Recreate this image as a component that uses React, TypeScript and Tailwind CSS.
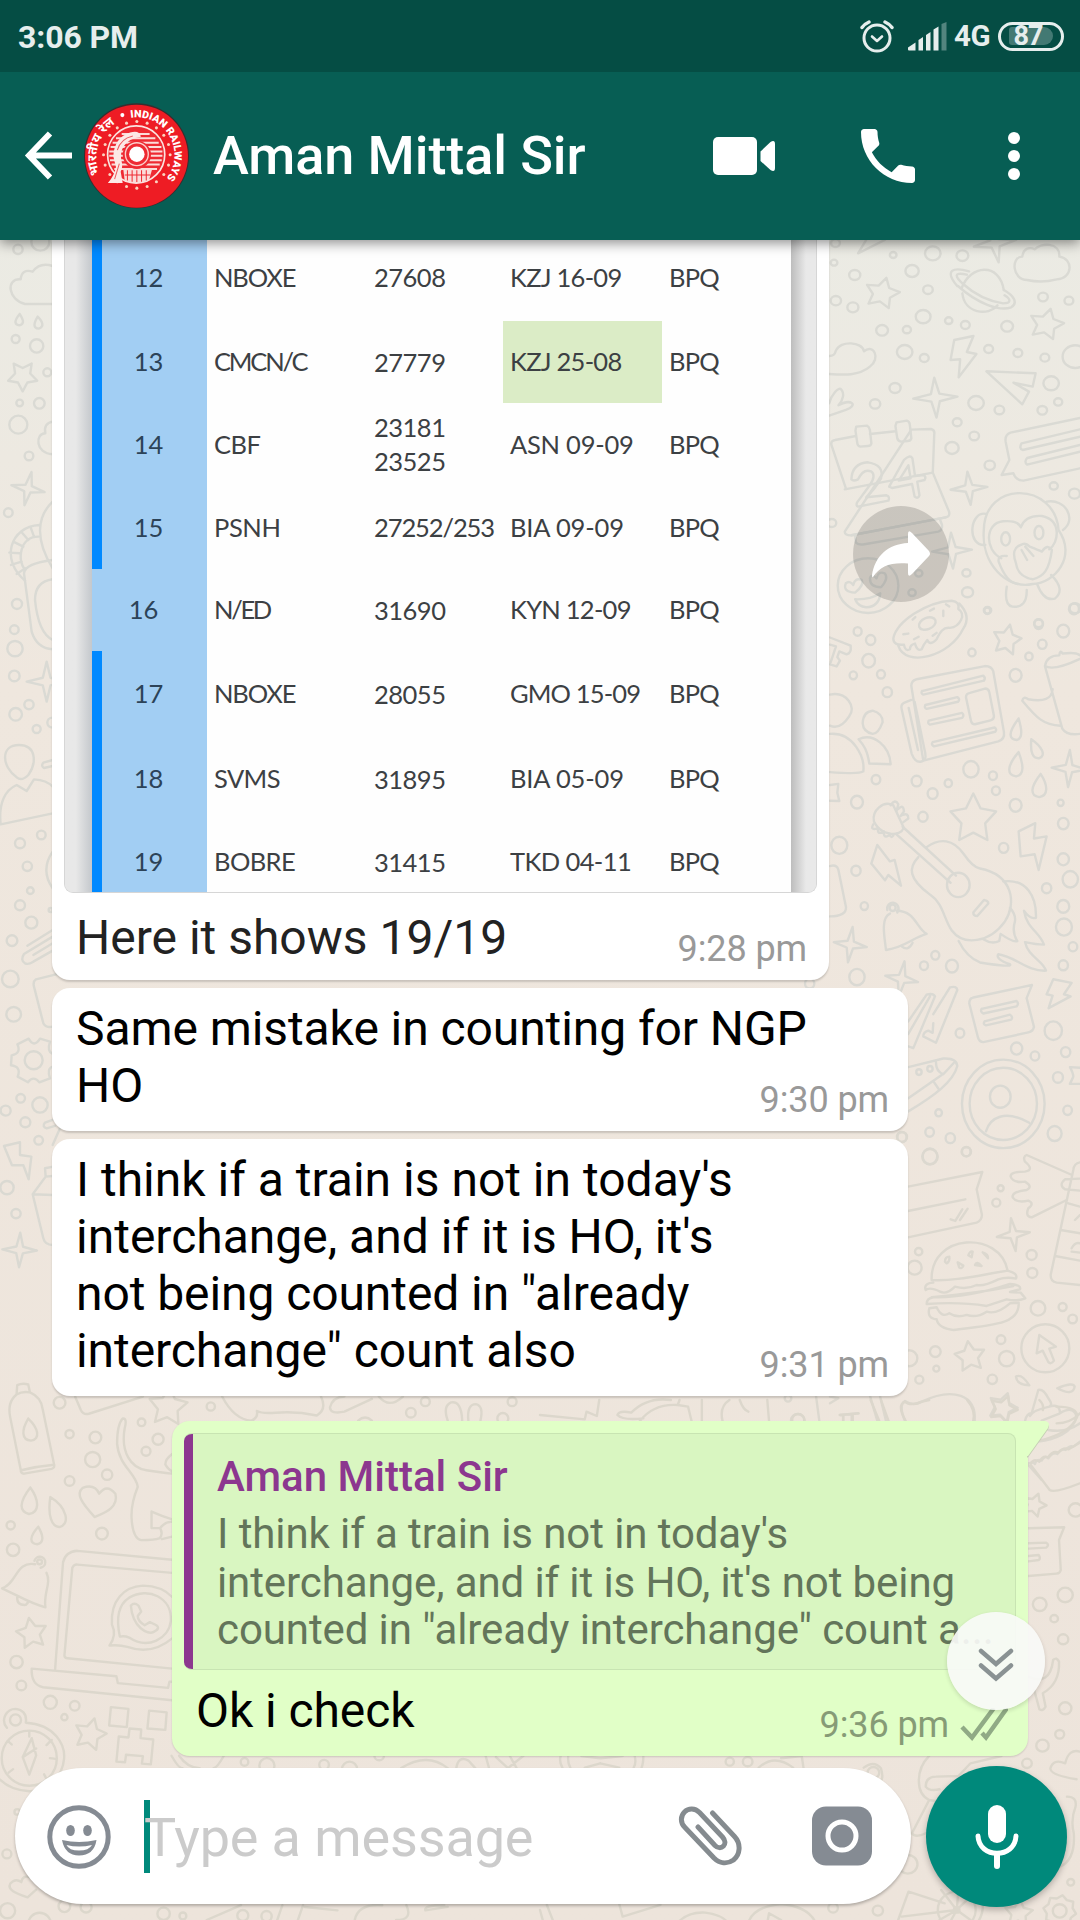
import React from "react";

type Pt = [number, number, number];

const starPath = (cx: number, cy: number, r: number, rot = 0, n = 5, inner = 0.52) => {
  let d = "";
  for (let i = 0; i < n * 2; i++) {
    const a = ((rot - 90 + (i * 180) / n) * Math.PI) / 180;
    const q = i % 2 ? r * inner : r;
    d += `${i ? "L" : "M"}${(cx + q * Math.cos(a)).toFixed(1)} ${(cy + q * Math.sin(a)).toFixed(1)}`;
  }
  return d + "Z";
};

const sparkPath = (cx: number, cy: number, r: number, rot = 0) => starPath(cx, cy, r, rot, 4, 0.27);

function Dots({ pts }: { pts: Pt[] }) {
  return (
    <>
      {pts.map(([x, y, r], i) => (
        <circle key={i} cx={x} cy={y} r={r} />
      ))}
    </>
  );
}

function Paths({ list }: { list: string[] }) {
  return (
    <>
      {list.map((d, i) => (
        <path key={i} d={d} />
      ))}
    </>
  );
}

function Wallpaper() {
  return (
    <svg
      className="absolute inset-0 [&_*]:[vector-effect:non-scaling-stroke]"
      width="1080"
      height="1920"
      viewBox="0 0 1080 1920"
      fill="none"
      strokeWidth="2.4"
      strokeLinecap="round"
      strokeLinejoin="round"
      aria-hidden="true"
    >
      {/* upper right */}
      <g stroke="#dadad4" transform="translate(500 230) scale(0.3699 0.3333)">
        <Dots
          pts={[
            [907, 39, 12], [1063, 75, 9], [1170, 70, 21], [1250, 77, 16], [903, 98, 9], [959, 135, 15], [1114, 123, 18],
            [1157, 179, 13], [908, 212, 14], [954, 232, 15], [1144, 260, 20], [1468, 201, 13], [1538, 212, 12],
            [1213, 272, 10], [1258, 285, 12], [1371, 289, 16], [1033, 301, 16], [1100, 299, 11], [1094, 366, 21],
            [1147, 384, 12], [1321, 357, 12], [1400, 369, 12], [1473, 383, 12], [1555, 380, 34], [1490, 460, 21],
            [1068, 474, 15], [1014, 522, 14], [1287, 519, 21], [1350, 540, 13], [1466, 541, 13], [1509, 516, 11],
            [1236, 577, 12], [1282, 618, 13], [1222, 654, 18], [1324, 706, 14], [1497, 768, 11], [1553, 791, 15],
            [897, 879, 12], [1132, 1030, 10], [1261, 1029, 11], [1114, 1088, 10], [1264, 1087, 15], [1318, 1141, 10],
            [1555, 1135, 15], [1456, 1180, 12],
          ]}
        />
        <Paths
          list={[
            starPath(1033, 190, 48, 14), starPath(1477, 283, 48, 14),
            sparkPath(1177, 503, 60, -3), sparkPath(1268, 775, 50, -5), sparkPath(1222, 962, 54, -3), sparkPath(1338, 40, 58, -10),
            "M968 70 L1040 30 M968 70 L990 30",
            "M1425 150 C1385 150 1380 80 1412 80 C1415 55 1430 50 1446 58 C1460 38 1515 35 1512 80 C1550 85 1550 145 1505 148 Q1465 160 1425 150",
            "M1248 175 C1270 105 1350 95 1362 180 M1250 190 C1255 250 1320 260 1345 226",
            "M1236 168 C1200 120 1225 110 1268 124 M1238 168 C1290 220 1350 245 1382 232 C1402 218 1388 196 1362 180 M1262 134 C1225 125 1230 140 1252 162 C1290 200 1330 215 1360 220 C1382 220 1382 208 1364 196",
            "M1228 330 L1280 318 L1262 366 L1288 372 L1240 442 L1244 388 L1218 390 Z",
            "M890 378 C900 378 905 375 908 362 C920 330 980 335 984 364 C1010 340 1030 385 1000 410 C970 438 930 435 890 432",
            "M1315 424 L1448 430 L1440 470 L1388 458 L1430 485 L1412 523 Z",
            "M890 520 C895 495 915 470 922 478 C932 490 928 510 915 526 C950 505 970 525 935 540 L890 557",
            "M935 775 L896 645 Q894 632 906 630 L962 618 M1000 612 L1070 604 M1112 599 L1165 597 Q1176 600 1174 612 L1170 728 L1214 845 Q1217 860 1205 862 L950 916 Q932 917 932 905 Z",
            "M932 778 L1170 728",
            "M963 590 L992 587 Q998 590 1000 600 L1004 640 Q1003 648 994 648 L974 650 Q967 648 966 640 L961 602 Z",
            "M1072 577 L1100 572 Q1107 574 1108 585 L1112 625 Q1110 633 1102 633 L1084 635 Q1076 633 1074 625 L1069 588 Z",
            "M950 748 Q952 700 995 697 Q1040 705 1030 745 Q1015 775 990 802 L1045 796 Q1055 800 1050 812 L968 830 Q962 828 965 818 L1000 765 Q1018 735 1003 724 Q982 715 968 748 Q955 755 950 748",
            "M1052 770 L1092 690 Q1108 672 1115 685 L1122 738 L1145 735 Q1153 740 1148 750 L1128 755 L1134 796 Q1130 808 1121 800 L1114 762 L1060 774 Z M1078 752 L1104 706 L1110 745 Z",
            "M960 916 L962 938 Q970 946 985 943 L1185 905 Q1197 900 1195 885 L1190 870 M950 916 L1205 862",
            "M1568 564 L1380 608 Q1364 615 1367 635 L1377 690 L1356 735 L1388 730 Q1395 752 1415 752 L1568 715",
            "M1568 598 L1410 640 Q1402 655 1413 660 L1568 620 M1568 645 L1425 684 Q1416 695 1425 704 L1568 665",
            "M1308 900 C1310 750 1500 755 1510 900 C1560 980 1500 1060 1440 1062 C1370 1080 1300 1000 1308 900 M1315 852 C1270 840 1260 950 1312 945 M1478 815 C1530 805 1560 870 1522 900",
            "M1355 985 C1310 960 1310 880 1360 874 Q1400 870 1408 892 Q1420 855 1465 858 C1520 870 1510 940 1485 958",
            "M1395 1000 Q1380 955 1408 945 Q1420 935 1432 950 Q1455 960 1465 965 Q1480 940 1492 960 C1485 1020 1470 1040 1440 1048 Q1400 1040 1395 1000 M1370 978 Q1345 975 1348 995 Q1370 1060 1400 1062 M1410 960 L1425 990 M1420 950 L1442 978",
            "M1370 1070 Q1362 1125 1385 1130 Q1425 1135 1424 1080 M1452 1062 Q1470 1115 1500 1106 Q1530 1080 1490 1035",
            "M935 1060 Q925 1085 960 1088 Q985 1065 978 1050 Q960 1042 955 1065 Q945 1050 935 1060 M1000 1045 Q1000 1072 1030 1072 Q1052 1045 1040 1030 Q1022 1022 1018 1045 Q1005 1030 1000 1045 M960 1108 Q1000 1110 1028 1090 Q1025 1130 990 1132 Q968 1130 960 1108",
          ]}
        />
        <circle cx="995" cy="1067" r="82" />
        <ellipse cx="1367" cy="927" rx="12" ry="20" />
        <ellipse cx="1457" cy="908" rx="12" ry="20" />
      </g>

      {/* middle right */}
      <g stroke="#dad9d3" transform="translate(580 600) scale(0.3333 0.3571)">
        <Dots
          pts={[
            [833, 88, 12], [872, 112, 14], [866, 170, 19], [820, 211, 11], [903, 208, 12], [922, 258, 14], [1222, 30, 9],
            [1376, 68, 13], [1450, 87, 18], [1387, 124, 13], [1347, 158, 11], [1176, 147, 11], [1307, 211, 18],
            [1482, 25, 15], [888, 503, 13], [1010, 507, 15], [1058, 542, 15], [1105, 513, 11], [1173, 474, 23],
            [1239, 492, 12], [1248, 534, 12], [1307, 575, 18], [1442, 568, 9], [1450, 626, 16], [831, 566, 18],
            [1029, 607, 14], [1271, 694, 14], [1450, 726, 17], [1471, 782, 23], [1400, 807, 14], [778, 687, 24],
            [828, 758, 14], [853, 857, 11], [1450, 858, 18], [1452, 916, 24], [1479, 971, 13], [1450, 1023, 14],
            [831, 1056, 23], [1032, 1024, 12], [1066, 995, 12], [1116, 1025, 18], [689, 1074, 14], [1420, 1206, 26],
            [1310, 1256, 17], [1365, 1277, 13], [1457, 1266, 14], [1140, 1213, 13], [1434, 1337, 15], [1463, 1429, 13],
            [1424, 1494, 21], [1076, 1436, 10], [1049, 1490, 13], [1111, 1507, 14], [1159, 1545, 13], [966, 1504, 14],
            [1050, 1558, 22], [1017, 1322, 8], [1050, 1313, 8],
          ]}
        />
        <Paths
          list={[
            starPath(1281, 112, 44, 12), starPath(1180, 614, 72, 0), sparkPath(1467, 472, 52, 3),
            sparkPath(811, 965, 50, 8), sparkPath(965, 1061, 50, 10),
            "M940 108 C950 60 1040 5 1115 2 Q1140 5 1135 25 C1160 40 1140 75 1110 78 C1090 75 1080 90 1070 110 Q1050 130 1042 112 Q1030 125 1025 138 Q1012 145 1005 122 Q990 125 990 138 Q975 145 972 125 Q940 128 940 108",
            "M955 128 C975 190 1110 160 1150 80 Q1175 45 1138 10 M1002 110 L1016 103 M970 96 L985 94 M1058 100 L1070 92 M1090 45 L1090 30 M1098 12 L1108 18 M1050 30 L1062 24 M998 55 L1006 48",
            "M750 105 L812 128 Q815 150 800 152 L778 144 L772 160 L780 170 L770 186 L750 180 M750 125 L768 130 L752 175",
            "M994 240 Q995 225 1010 222 L1215 185 Q1235 185 1240 200 L1272 370 Q1275 390 1255 396 L1030 450 Z M994 280 L972 288 Q962 292 965 305 L995 430 Q1005 455 1022 453 Q1040 450 1036 430 L1004 285 M986 302 L1014 420",
            "M1026 255 L1210 212 Q1218 218 1212 226 L1030 265 Q1022 262 1026 255 M1036 294 L1132 272 Q1142 278 1134 285 L1040 305 Q1032 302 1036 294 M1046 338 L1146 316 Q1154 322 1147 330 L1050 349 Q1042 346 1046 338 M1058 398 L1244 357 Q1252 362 1246 369 L1062 410 Q1052 405 1058 398",
            "M1158 272 Q1158 262 1170 260 L1215 248 Q1226 248 1228 258 L1242 325 Q1242 335 1232 337 L1185 348 Q1175 348 1173 338 Z",
            "M1395 185 L1447 360 Q1460 380 1500 375 M1395 185 Q1400 155 1438 155 Q1440 138 1448 150 Q1490 145 1500 155 M1395 185 Q1420 200 1500 165 M1418 250 Q1415 290 1345 278 Q1330 268 1327 282 C1370 330 1390 350 1442 352",
            "M1316 332 C1285 370 1285 390 1310 392 C1330 388 1325 360 1316 332 M1354 390 C1350 430 1360 445 1378 443 C1400 435 1385 410 1354 390 M1316 426 C1280 465 1280 490 1308 494 C1335 490 1330 460 1316 426 M1382 487 C1350 525 1350 548 1378 552 C1405 548 1405 520 1382 487",
            "M750 265 C800 255 830 300 808 325 Q780 365 750 352 M750 375 C820 370 855 440 850 480 Q840 488 750 482 M836 390 C880 370 930 410 932 460 L868 458 C862 420 850 405 836 390 M848 345 Q850 312 878 310 Q908 318 908 342 Q895 375 878 375 Q850 370 848 345",
            "M750 518 L775 515 L772 540 L778 563 L750 562",
            "M882 620 C875 590 910 560 940 575 L970 635 Q972 650 945 655 Q900 655 882 620",
            "M932 575 Q945 555 955 572 L950 590 M955 585 Q970 570 972 592 L962 605 M968 602 Q985 595 985 612 L970 622 M880 628 Q870 645 890 640 M895 638 Q890 658 910 650 M912 648 Q910 668 925 660 M928 655 Q935 672 942 655",
            "M968 635 L1128 772 M948 655 L1112 792",
            "M1040 692 C1080 665 1120 670 1150 710 Q1180 750 1200 752 C1300 770 1310 850 1275 900 C1230 960 1150 970 1115 925 C1090 890 1090 850 1050 825 C985 780 985 750 1015 720",
            "M1180 875 L1212 840 Q1225 842 1225 850 L1192 885 Q1180 885 1180 875",
            "M1270 788 C1340 780 1370 830 1368 890 Q1350 895 1332 870 C1340 920 1380 930 1392 965 Q1370 965 1335 958 C1345 1000 1390 1010 1398 1038 C1340 1040 1310 1000 1255 992 Q1245 1005 1290 1020 Q1300 1030 1200 1015 Q1160 1000 1136 955 M1210 950 Q1235 965 1258 955 L1262 935 Q1300 960 1312 955 Q1295 930 1305 900 Q1308 880 1290 862",
            "M892 686 L930 732 L944 728 L963 800 L925 770 L915 785 L874 738 Z M1316 648 L1366 625 L1362 668 L1400 662 L1376 756 L1364 712 L1322 718 Z M1420 1062 L1475 1072 L1452 1104 L1472 1110 L1406 1143 L1418 1108 L1400 1104 Z",
            "M930 878 C900 890 915 950 918 980 C970 975 1000 945 1040 935 C1010 920 1005 870 950 870 M965 970 Q985 985 998 960 M922 868 A17 17 0 1 1 952 875",
            "M750 745 Q770 740 775 755 L798 860 Q800 885 750 886",
            "M985 1180 L1040 1105 Q1060 1100 1065 1110 L1000 1255 L985 1250 M1060 1160 L1110 1085 Q1130 1080 1132 1092 L1068 1240 L1030 1222 Q1030 1210 1045 1206 L1058 1212 L1060 1185 M985 1215 L1050 1110",
            "M1180 1113 L1356 1078 L1340 1115 L1362 1195 Q1360 1208 1345 1211 L1210 1238 Q1198 1238 1194 1225 L1168 1130 Q1168 1115 1180 1113 M1205 1145 L1310 1123 Q1318 1130 1310 1138 L1210 1158 Q1200 1152 1205 1145 M1214 1180 L1290 1161 Q1300 1168 1294 1175 L1218 1191 Q1208 1188 1214 1180",
            "M985 1308 L1090 1284 Q1130 1282 1132 1305 C1120 1350 1060 1390 985 1432 M1068 1295 Q1068 1320 1090 1328 L1122 1296 M985 1395 L1085 1330 M1062 1350 L1075 1368",
            "M1500 1310 L1470 1308 Q1480 1325 1480 1335 L1470 1355 L1500 1355",
            "M1218 1488 C1230 1450 1275 1425 1348 1464",
          ]}
        />
        <ellipse cx="1042" cy="66" rx="26" ry="16" transform="rotate(-20 1042 66)" />
        <circle cx="1135" cy="798" r="34" />
        <circle cx="1270" cy="1411" r="124" />
        <circle cx="1270" cy="1411" r="101" />
        <circle cx="1261" cy="1391" r="31" />
        <circle cx="938" cy="862" r="9" />
      </g>

      {/* lower right, beside the long message */}
      <g stroke="#dcd8cf" transform="translate(780 1000) scale(0.3333)">
        <Dots
          pts={[
            [450, 470, 23], [559, 455, 14], [366, 411, 15], [662, 565, 9], [649, 608, 12], [755, 765, 15], [757, 819, 15],
            [416, 755, 11], [404, 803, 21], [774, 925, 22], [848, 921, 12], [878, 957, 13], [663, 1019, 13], [466, 1055, 16],
            [469, 1106, 9], [418, 1139, 12], [680, 1076, 23], [637, 1138, 14], [388, 1075, 24], [796, 1045, 72],
            [24, 1195, 10], [53, 1262, 20],
          ]}
        />
        <Paths
          list={[
            sparkPath(700, 704, 50, -8), starPath(570, 1070, 47, -8), starPath(668, 1222, 45, 20),
            "M384 560 L607 516 L590 568 L606 645 Q605 662 590 668 L384 712 M384 633 L556 598 M512 658 L526 663 L547 628 M540 660 L563 626",
            "M876 525 L740 465 Q728 470 735 485 Q765 510 735 515 Q690 515 692 530 Q700 550 735 545 Q760 560 740 570 Q695 575 698 592 Q710 610 745 602 Q765 610 745 625 Q735 650 755 652 L860 600",
            "M900 487 Q882 490 880 510 L812 825 Q812 845 830 848 L900 855 M900 536 L855 538 Q835 555 855 568 L900 572 M865 610 L900 620 M842 690 L900 700 M825 768 L900 782 M885 660 L900 645 M875 745 Q885 725 900 730 M875 755 L900 758",
            "M455 840 C450 700 660 690 683 812 Q715 820 708 836 Q680 830 655 838 Q610 860 590 855 Q560 870 525 860 Q500 885 480 875 Q450 860 437 870 Q430 850 460 848 M455 840 C520 845 600 825 683 812",
            "M440 912 Q440 895 460 892 Q560 895 690 852 Q725 855 720 868 L690 876 L722 878 L736 895 Q710 905 680 898 L620 918 Q540 905 440 912 M455 892 Q590 880 700 858",
            "M470 958 Q440 955 448 925 L470 922 Q485 955 508 940 Q530 955 560 945 Q590 955 620 935 Q650 945 690 910 L716 908 C720 970 650 975 520 990 Q475 985 470 958",
            "M495 785 Q495 770 508 770 Q510 785 500 790 Z M533 787 L550 797 Q545 808 538 803 Z M565 766 Q570 752 578 755 L575 772 Z M608 757 Q625 762 624 775 Z M585 795 Q590 782 605 798 Z",
            "M770 1060 L778 1005 L828 1040 L808 1046 L822 1082 Q812 1095 805 1086 L788 1052 Z",
            "M708 1130 Q725 1120 748 1156 Q710 1155 708 1130 M832 1165 Q880 1145 884 1160 Q880 1190 832 1165",
            "M375 1263 Q355 1215 375 1203 Q400 1220 425 1205 C520 1160 590 1185 584 1263",
            "M735 1263 Q740 1240 755 1240 L775 1170 Q790 1165 805 1195 Q820 1215 808 1220 Q760 1230 750 1248 M808 1220 Q840 1210 840 1240 L785 1262 M840 1240 Q880 1215 890 1250 C880 1300 820 1320 775 1325 M805 1290 Q860 1300 900 1270",
            "M745 1390 Q760 1385 765 1392 Q770 1375 785 1382 Q795 1365 805 1375 Q820 1355 832 1362 Q845 1345 857 1350 Q870 1335 880 1340 L900 1325 M745 1395 L785 1440",
            "M108 1188 L118 1263 M270 1188 L292 1263 M300 1188 L318 1263 M150 1190 L175 1195 L150 1210 M180 1245 L235 1240 M190 1263 L190 1248 M215 1263 L215 1245",
          ]}
        />
      </g>

      {/* lower left */}
      <g stroke="#dcd7cc" transform="translate(0 1380) scale(0.3444)">
        <Dots
          pts={[
            [173, 66, 17], [202, 157, 12], [277, 167, 17], [269, 231, 22], [202, 293, 14], [311, 275, 15], [411, 123, 11],
            [459, 172, 16], [424, 207, 13], [31, 422, 12], [38, 493, 18], [296, 446, 17], [612, 77, 12], [48, 819, 18],
            [62, 887, 14], [146, 936, 19], [217, 946, 14], [187, 979, 9], [45, 987, 16], [115, 528, 7], [20, 1376, 13],
            [22, 1541, 22], [187, 1528, 17], [250, 1530, 16], [475, 1550, 18], [531, 1556, 10], [1235, 63, 13],
            [1193, 95, 14], [1487, 63, 13], [1460, 112, 16], [710, 1109, 11], [775, 1120, 22], [941, 1117, 14],
            [1015, 1130, 22], [1101, 1090, 14], [705, 1555, 16], [774, 1557, 15], [115, 1580, 33], [50, 1254, 8],
          ]}
        />
        <Paths
          list={[
            starPath(488, 78, 58, 5), starPath(92, 736, 46, -10), starPath(262, 1029, 48, 15),
            "M48 42 L50 15 Q65 8 82 13 L87 36 M48 42 Q65 32 87 36 Q120 50 124 85 L157 245 Q160 255 150 258 L70 272 Q60 272 60 260 L30 110 Q20 65 48 42 M62 262 Q110 250 157 246 M82 112 C62 145 62 175 90 176 C118 172 112 140 82 112",
            "M218 48 L235 88 Q242 102 258 98 L415 48 M645 48 Q680 115 730 118 Q750 110 746 90 Q760 98 800 95 Q860 90 920 103 Q950 85 932 48 M958 80 Q965 50 1000 48 M958 80 Q960 100 1000 92 L1080 55 M1100 48 Q1130 85 1170 48",
            "M1300 118 Q1285 75 1310 65 Q1340 60 1342 118 M1360 118 Q1355 70 1382 70 Q1405 75 1395 118 M1040 118 Q1060 100 1080 118",
            "M356 112 Q340 130 340 185 C345 250 395 270 400 310 Q380 360 382 400 Q385 460 410 465 Q450 465 462 460 Q475 450 465 430 L440 430 L440 382 Q470 395 500 405 M356 112 Q370 110 362 140 C350 210 380 255 425 262 Q480 270 500 272 M500 215 Q480 230 480 245 Q490 262 500 265 M465 430 Q480 410 500 412 M470 462 L500 455",
            "M88 312 C55 355 55 382 84 389 C115 385 115 350 88 312 M146 340 C138 395 150 425 172 427 C205 420 195 370 146 340 M111 426 C85 455 85 475 108 477 C130 472 125 450 111 426",
            "M275 398 C235 355 220 330 240 313 Q275 300 288 330 Q310 300 335 330 C345 370 305 385 275 398",
            "M102 535 C45 525 50 590 6 605 C50 625 90 650 132 660 C125 620 150 590 135 560 M100 525 A16 16 0 1 1 118 545 M50 630 Q48 655 75 653 L82 645",
            "M160 840 L183 530 Q190 498 225 496 L500 522 M187 800 L210 545 Q215 535 225 536 L500 560 M187 800 Q188 808 196 808 L500 838",
            "M92 838 L338 860 L342 880 L488 894 L492 876 L500 876 M92 838 Q90 885 125 892 L500 930",
            "M318 771 Q340 740 325 710 C320 640 360 600 415 597 Q470 598 500 630 M318 771 Q345 768 370 775 Q440 800 500 750 M348 745 Q330 660 375 632 C430 600 500 630 496 700 C490 750 430 785 375 748 Q362 742 348 745",
            "M380 655 C385 720 430 740 445 732 Q470 720 450 710 L435 703 L420 712 Q400 700 400 685 L410 672 L402 655 Q390 645 380 655",
            "M322 950 L373 955 L368 1008 L317 1003 Z M433 960 L484 965 L480 1016 L428 1012 Z M376 1012 L410 1015 L408 1040 L445 1044 L438 1116 L412 1114 L415 1092 L366 1088 L363 1110 L338 1108 L345 1035 L373 1038 Z",
            "M20 1010 C0 985 20 955 45 955 Q80 960 75 995 C160 1000 190 1060 186 1100 C180 1160 130 1195 85 1194 Q30 1190 0 1160 M92 1040 L105 1090 L85 1146 L66 1095 Z M66 1095 L105 1070 M85 1020 L85 1035 M150 1045 L135 1060 M162 1100 L145 1098 M135 1158 L128 1145 M22 1048 L34 1058 M25 1140 L38 1130",
            "M80 1502 C45 1490 20 1480 30 1462 Q45 1445 62 1458 Q65 1435 90 1445 M80 1502 L105 1480",
            "M498 1091 Q520 1130 530 1127 M520 1091 Q545 1127 580 1127 M650 1091 Q630 1127 620 1127",
            "M1165 1127 Q1240 1080 1300 1127 M1325 1127 Q1330 1090 1360 1105 L1380 1127 M1410 1091 L1420 1127 M1440 1095 L1475 1127 L1520 1091 M1480 1091 L1500 1127",
            "M600 1568 L700 1525 M820 1525 L805 1568 M880 1525 L865 1568 M885 1530 L980 1540 M1030 1568 Q1040 1520 1110 1525 M1180 1525 Q1200 1568 1150 1568 M1235 1540 Q1230 1525 1290 1525 M1235 1540 L1300 1530",
          ]}
        />
        <circle cx="85" cy="1098" r="80" />
      </g>

      {/* bottom right */}
      <g stroke="#dcd7cc" transform="translate(540 1400) scale(0.3444 0.3333)">
        <Dots
          pts={[
            [1555, 330, 20], [1451, 613, 20], [1525, 585, 22], [1493, 656, 11], [1519, 718, 15], [1525, 925, 18],
            [1509, 1003, 13], [1459, 1037, 18], [1414, 1090, 14], [551, 1085, 12], [603, 1085, 14], [968, 1118, 17],
            [1068, 1393, 28], [851, 1524, 14], [981, 1532, 15], [1541, 1447, 10], [1509, 1533, 20], [1210, 1530, 8],
            [750, 60, 18],
          ]}
        />
        <Paths
          list={[
            starPath(1435, 315, 36, 20), starPath(1345, 28, 42, 20), starPath(1390, 1540, 42, 5), starPath(1509, 1533, 48, 10, 8, 0.8),
            "M1450 0 Q1465 15 1460 30 M1500 20 Q1560 20 1560 50 Q1540 100 1450 122 M1500 70 Q1540 70 1568 40 M1425 190 Q1435 175 1450 185 Q1460 165 1475 172 Q1490 150 1505 158 Q1520 140 1535 148 L1568 128 M1425 195 L1480 270 Q1495 280 1568 250",
            "M1418 385 L1522 382 L1507 420 L1512 510 Q1510 520 1500 521 L1418 528 M1418 430 L1470 428 Q1480 435 1470 443 L1418 446 M1418 468 L1448 465 Q1455 475 1448 480 L1418 484",
            "M1418 830 Q1480 860 1490 780 Q1500 770 1507 785 Q1510 850 1460 880 L1468 920 Q1460 935 1450 928 L1435 870",
            "M1120 1300 Q1090 1315 1080 1300 L1130 1200 C1090 1180 1090 1110 1130 1068 M1130 1200 L1160 1205 M1120 1160 Q1120 1130 1150 1130 L1215 1128 L1250 1090 L1340 1068 M1120 1160 Q1130 1175 1160 1168",
            "M1558 1138 Q1480 1125 1482 1105 Q1490 1075 1525 1090 Q1535 1045 1568 1055 M1530 1190 Q1560 1190 1555 1220 Q1540 1260 1550 1300 Q1555 1380 1510 1400",
            "M60 1068 Q55 1085 65 1103 M82 1068 Q80 1090 88 1103 M300 1068 Q300 1090 295 1103 M275 1068 Q280 1090 272 1103 M175 1075 L120 1068 M175 1075 L240 1068 M175 1090 L130 1103 M175 1090 L230 1103 M635 1103 Q680 1060 735 1103 M700 1075 L760 1068 L765 1103 M940 1103 Q970 1080 990 1105 Q1000 1140 985 1145",
            "M1040 1560 L1070 1475 L1175 1510 M1050 1550 L1210 1530 L1165 1470 M1210 1530 L1215 1470 M1210 1530 L1250 1490 M1210 1530 L1160 1560 M1210 1530 L1190 1568 M1210 1530 L1250 1560 M1285 1500 Q1290 1540 1270 1568",
            "M230 1512 L240 1550 L350 1515 M400 1568 Q430 1535 480 1538 Q530 1545 545 1568 M605 1568 Q620 1520 700 1512 Q780 1520 800 1568 M660 1568 L665 1540 L700 1560 M0 1530 L10 1568 M20 1515 L40 1568",
            "M0 45 L130 58 L135 35 L165 48 L172 0 M225 45 Q230 30 265 38 Q310 -10 380 0 M225 45 Q240 62 300 55 M290 63 Q330 10 400 15 L430 20 M400 15 L405 0 M430 20 L440 63 M470 63 L470 0 M530 63 Q520 20 550 0 M580 0 Q590 30 605 35 M660 0 L665 63",
            "M870 45 L925 40 M880 62 L880 48 M908 62 L908 42 M960 0 L985 63 M990 0 L1012 63 M1062 63 Q1035 15 1060 5 Q1075 20 1110 5 L1130 0 M1240 0 Q1265 30 1258 63",
          ]}
        />
        <circle cx="1210" cy="1530" r="55" />
      </g>

      {/* left edge, upper part */}
      <g stroke="#dadad4" transform="translate(0 240) scale(0.3333)">
        <Dots
          pts={[
            [54, 28, 14], [121, 5, 27], [47, 297, 12], [110, 318, 20], [142, 397, 12], [59, 489, 10], [118, 490, 16],
            [55, 554, 27], [87, 648, 13], [25, 818, 13], [51, 1092, 15], [43, 1169, 13], [45, 1226, 23], [43, 1308, 16],
            [87, 1394, 14], [47, 1423, 19], [110, 1467, 12], [157, 1448, 15],
          ]}
        />
        <Paths
          list={[
            starPath(68, 408, 46, 180), sparkPath(84, 746, 51, 12), sparkPath(140, 1325, 60, 0),
            "M158 192 L75 192 C25 180 15 115 62 118 Q65 85 98 95 Q120 65 158 78",
            "M59 222 C40 245 45 255 58 256 C75 252 70 240 59 222 M113 230 C98 255 102 265 116 266 C134 260 128 245 113 230",
            "M158 545 Q130 550 136 580 C105 580 105 640 158 643",
            "M158 785 C110 830 105 900 158 985 M118 855 C30 860 0 960 75 1022 M115 890 C60 890 50 960 75 990 M65 877 L85 900 M92 862 L102 890 M40 905 L70 920 M28 938 L60 940 M33 975 L65 965 M50 1002 L76 985",
            "M158 960 Q75 970 72 1000 L95 1175 Q110 1225 158 1228 M158 1018 Q105 1025 105 1080 Q115 1180 158 1200",
          ]}
        />
      </g>

      {/* left edge, lower part */}
      <g stroke="#dad9d2" transform="translate(0 740) scale(0.3333)">
        <Dots
          pts={[
            [124, 285, 13], [60, 310, 15], [82, 379, 14], [91, 452, 10], [60, 496, 15], [94, 548, 18], [36, 602, 16],
            [31, 717, 25], [41, 823, 22], [101, 961, 27], [62, 1075, 13], [17, 1112, 15], [120, 1095, 23], [76, 1147, 15],
            [116, 1201, 13], [21, 1343, 20], [48, 1421, 14], [152, 510, 6],
          ]}
        />
        <Paths
          list={[
            "M57 15 C110 15 110 70 85 105 Q65 125 50 112 C5 80 0 15 57 15",
            "M2 253 C-5 190 15 150 50 135 L80 153 L102 118 Q140 120 158 140 M2 253 L158 220 M158 60 L130 68 Q122 78 132 84 L158 78",
            "M158 335 Q120 390 158 445 M82 617 L158 570 M158 590 L72 642 Q60 660 75 670 Q85 675 100 665 L158 632 M100 645 L158 610",
            "M180 700 L108 718 Q98 725 102 740 L130 850 Q140 865 158 860",
            "M86 896 Q102 925 120 896 L150 905 Q140 935 158 942 M86 896 L52 913 Q65 940 35 946 L33 976 Q65 980 53 1010 L84 1027 Q100 1005 118 1027 L150 1015 Q140 985 158 980",
            "M12 1218 L60 1207 L60 1245 L94 1250 L86 1318 L70 1276 L36 1276 Z",
            "M158 1140 L135 1148 Q125 1160 140 1165 L165 1158 M158 1215 L180 1165 M160 1280 L135 1285 L137 1310 L98 1363 L130 1495 Q135 1515 158 1515 M98 1363 L158 1365 M137 1310 L158 1308",
            sparkPath(59, 1530, 52, 2),
          ]}
        />
      </g>
    </svg>
  );
}

function RailwaysEmblem() {
  const rays = Array.from({ length: 20 }, (_, i) => i * 18);
  return (
    <svg width="105" height="106" viewBox="13 10 312 315" aria-label="Indian Railways">
      <circle cx="169" cy="167" r="156" fill="#3a2c2e" />
      <circle cx="169" cy="168" r="153" fill="#ee1c24" />
      <g fill="#fbd3c0">
        {rays.map((a) => (
          <circle
            key={a}
            cx={170 + 99 * Math.sin((a * Math.PI) / 180)}
            cy={164 - 99 * Math.cos((a * Math.PI) / 180)}
            r="4.5"
          />
        ))}
      </g>
      <circle cx="168" cy="163" r="85" fill="#ee2a32" stroke="#fce4e0" strokeWidth="5" />
      <g stroke="#fbdcd9" strokeWidth="6">
        <path d="M125 102H208M108 115H225M98 128H235M92 141H243M88 154H246M88 167H246M90 180H244M95 193H238M103 206H230" />
      </g>
      <circle cx="170" cy="164" r="42" fill="#ee2a32" />
      <path
        d="M100 168Q104 112 150 98Q178 90 182 110Q146 114 130 140Q120 158 124 180Q130 200 122 214L128 248H84Q104 224 108 200Z"
        fill="#fce9e6"
      />
      <path d="M112 150Q122 116 158 108M104 236L118 190" fill="none" stroke="#ee5a5e" strokeWidth="3" />
      <circle cx="170" cy="162" r="34" fill="none" stroke="#fbd0cc" strokeWidth="4" />
      <circle cx="170" cy="162" r="23" fill="#fff" />
      <path d="M130 208H215L206 240Q170 255 134 240Z" fill="#fbdcd9" />
      <path d="M142 210V240M156 210V244M170 210V245M184 210V244M198 210V240M134 224H210" stroke="#ee2a32" strokeWidth="3" />
      <path id="ringEn" d="M152 54A112 112 0 0 1 249 244" fill="none" />
      <path id="ringHi" d="M60 222A122 122 0 0 1 122 62" fill="none" />
      <circle cx="127" cy="46" r="6" fill="#fff" />
      <text fill="#fff" fontFamily="Roboto, sans-serif" fontWeight="900" fontSize="31">
        <textPath href="#ringEn" textLength="268" lengthAdjust="spacingAndGlyphs">
          INDIAN RAILWAYS
        </textPath>
      </text>
      <text fill="#fff" fontFamily="'Noto Sans Devanagari', 'Noto Sans', sans-serif" fontWeight="700" fontSize="38">
        <textPath href="#ringHi" textLength="172" lengthAdjust="spacingAndGlyphs">
          भारतीय रेल
        </textPath>
      </text>
    </svg>
  );
}

function StatusBar() {
  return (
    <div className="relative flex h-[72px] items-center bg-[#054d44] pl-[18px] pr-[16px] text-[#e6eeed]">
      <span className="pt-[2px] text-[32px] font-bold leading-none tracking-[-0.100px]">3:06 PM</span>
      <div className="ml-auto flex items-center">
        <svg width="34" height="34" viewBox="0 0 34 34" fill="none" stroke="currentColor" strokeWidth="3" strokeLinecap="round" strokeLinejoin="round">
          <circle cx="17" cy="19" r="13" />
          <path d="M12 17.5L17 22L22 17.5" strokeWidth="2.6" />
          <path d="M2 8.5Q4.500 5 9 3M32 8.500Q29.500 5 25 3" strokeWidth="3.400" />
        </svg>
        <svg className="ml-[14px]" width="39" height="29" viewBox="0 0 39 29" fill="currentColor">
          <path d="M0 25.500L7.500 20.500V28.500H1Q0 28.500 0 27.500Z" />
          <path d="M10.500 18L15 15V28.500H10.500ZM18 13L22.500 10V28.500H18ZM25.500 7.500L30.500 4.500V28.500H25.500Z" />
          <path d="M33.500 2L38.500 0V28.500H33.500Z" opacity="0.350" />
        </svg>
        <span className="ml-[7px] w-[37px] pt-[2px] text-[29.500px] font-bold leading-none tracking-[-0.500px]">4G</span>
        <div className="ml-[7px] flex h-[29px] w-[66px] items-center rounded-full border-[3px] border-[#e6eeed] px-[8px]">
          <div className="flex h-[18px] w-[48px] items-center justify-center rounded-l-[3px] rounded-r-[9px] bg-white/25 pr-[6px]">
            <span className="text-[27px] font-bold leading-none tracking-[-1px]">87</span>
          </div>
        </div>
      </div>
    </div>
  );
}

function Header() {
  return (
    <div className="relative flex h-[168px] items-center bg-[#075e54] pl-[24px] pr-[60px] text-white">
      <svg className="-mt-[1px]" width="48" height="49" viewBox="0 0 48 49" fill="none" stroke="currentColor" strokeWidth="6">
        <path d="M48 24.500H5M26 2.500L5 24.500L26 46.500" />
      </svg>
      <div className="ml-[12px]">
        <RailwaysEmblem />
      </div>
      <span className="ml-[24px] text-[54px] font-medium leading-none tracking-[-0.080px] whitespace-nowrap">Aman Mittal Sir</span>
      <svg className="ml-auto" width="62" height="40" viewBox="0 0 62 40" fill="currentColor">
        <rect x="0" y="1" width="44" height="38" rx="5" />
        <path d="M47.500 15.500L57.500 6Q62 3.500 62 8V32Q62 36.500 57.500 34L47.500 25Z" />
      </svg>
      <svg className="ml-[86px]" width="54" height="54" viewBox="3 3 18 18" fill="currentColor">
        <path d="M6.620 10.790c1.440 2.830 3.760 5.140 6.590 6.590l2.200-2.200c.27-.27.67-.36 1.020-.24 1.120.37 2.330.57 3.570.57.55 0 1 .45 1 1V20c0 .55-.45 1-1 1-9.390 0-17-7.610-17-17 0-.55.45-1 1-1h3.500c.55 0 1 .45 1 1 0 1.250.2 2.450.57 3.570.11.35.03.74-.25 1.020l-2.200 2.200z" />
      </svg>
      <svg className="ml-[93px]" width="12" height="50" viewBox="0 0 12 50" fill="currentColor">
        <circle cx="6" cy="7" r="6" />
        <circle cx="6" cy="25" r="6" />
        <circle cx="6" cy="43" r="6" />
      </svg>
    </div>
  );
}

const rows = [
  { n: "12", h: "h-[87px]", type: "NBOXE", tt: "tracking-[-1.100px]", loco: ["27608"], at: "KZJ 16-09", ta: "tracking-[-0.750px]", bar: true },
  { n: "13", h: "h-[82px]", type: "CMCN/C", tt: "tracking-[-2.200px]", loco: ["27779"], at: "KZJ 25-08", ta: "tracking-[-0.750px]", bar: true, mark: true },
  { n: "14", h: "h-[83px]", type: "CBF", tt: "tracking-[-0.500px]", loco: ["23181", "23525"], at: "ASN 09-09", ta: "tracking-[-0.250px]", bar: true },
  { n: "15", h: "h-[83px]", type: "PSNH", tt: "tracking-[-0.400px]", loco: ["27252/253"], at: "BIA 09-09", ta: "tracking-[-0.150px]", bar: true },
  { n: "16", h: "h-[82px]", type: "N/ED", tt: "tracking-[-2.300px]", loco: ["31690"], at: "KYN 12-09", ta: "tracking-[-0.750px]", bar: false },
  { n: "17", h: "h-[86px]", type: "NBOXE", tt: "tracking-[-1.100px]", loco: ["28055"], at: "GMO 15-09", ta: "tracking-[-0.850px]", bar: true },
  { n: "18", h: "h-[84px]", type: "SVMS", tt: "tracking-[-0.600px]", loco: ["31895"], at: "BIA 05-09", ta: "tracking-[-0.150px]", bar: true },
  { n: "19", h: "h-[82px]", type: "BOBRE", tt: "tracking-[-0.600px]", loco: ["31415"], at: "TKD 04-11", ta: "tracking-[-0.600px]", bar: true },
];

function SheetPhoto() {
  return (
    <div className="flex h-[653px] overflow-hidden rounded-b-[9px] border-x border-b border-[#d6d6d6] bg-[#e9e9e9]">
      <div className="w-[27px] bg-linear-to-r from-[#e8e8e8] from-40% to-[#c4c8cc]" />
      <div className="-mt-[6px] w-[699px] bg-[#fefefe] font-[Lato] text-[25.500px] text-[#3c4043]">
        {rows.map((r) => (
          <div key={r.n} className={`flex items-stretch ${r.h}`}>
            <div
              className={`flex w-[115px] items-center justify-center bg-[#a2cef3] pr-[12px] pb-[1px] text-[#2c4358] ${
                r.bar ? "border-l-10 border-[#0089ff]" : ""
              }`}
            >
              {r.n}
            </div>
            <div className={`flex w-[160px] items-center pb-[1px] pl-[7px] ${r.tt}`}>{r.type}</div>
            <div
              className={`flex w-[136px] flex-col justify-center pb-[1px] pl-[7px] leading-[34px] ${
                r.n === "15" ? "tracking-[-1.100px]" : "tracking-[-0.500px]"
              }`}
            >
              {r.loco.map((l) => (
                <span key={l}>{l}</span>
              ))}
            </div>
            <div className={`flex w-[159px] items-center pb-[1px] pl-[7px] whitespace-nowrap ${r.ta} ${r.mark ? "bg-[#dbecc6]" : ""}`}>
              {r.at}
            </div>
            <div className="flex items-center pb-[1px] pl-[7px] tracking-[-0.800px]">BPQ</div>
          </div>
        ))}
      </div>
      <div className="flex-1 bg-linear-to-r from-[#bdbdbd] to-[#e9e9e9] to-60%" />
    </div>
  );
}

function Time({ children }: { children: string }) {
  return (
    <span className="block text-[36px] leading-[42px] tracking-[-0.100px] whitespace-nowrap text-[#999999]">{children}</span>
  );
}

const bubble = "ml-[52px] rounded-[18px] bg-white shadow-[0_2px_2px_rgba(0,0,0,0.16)]";

function Messages() {
  return (
    <div className="flex flex-col gap-2 text-[48px] leading-[57px] tracking-[-0.080px] text-black">
      <div className="flex items-start">
        <div className="ml-[52px] flex w-[777px] flex-col rounded-b-[18px] bg-white px-[12px] shadow-[0_2px_2px_rgba(0,0,0,0.16)]">
          <SheetPhoto />
          <div className="flex h-[87px] items-end justify-between pr-[10px] pb-[10px] pl-[12px]">
            <p className="mb-[4px] tracking-normal text-[#222222]">Here it shows 19/19</p>
            <Time>9:28 pm</Time>
          </div>
        </div>
        <div className="mt-[266px] ml-[24px] flex size-[96px] items-center justify-center rounded-full bg-black/15">
          <svg width="60" height="48" viewBox="0 0 60 48" fill="#fff">
            <path d="M37 13V4Q37 -1 41 3L58 21Q60 24 58 26L41 44Q37 48 37 43V33.500C20 32 9 36 2 47Q1 48 1 45C4 26 17 14 37 13Z" />
          </svg>
        </div>
      </div>

      <div className={`${bubble} flex h-[143px] w-[856px] items-end justify-between pr-[19px] pb-[10px] pl-[24px]`}>
        <p className="mb-[7px] whitespace-nowrap">
          Same mistake in counting for NGP
          <br />
          HO
        </p>
        <div className="-ml-[140px]">
          <Time>9:30 pm</Time>
        </div>
      </div>

      <div className={`${bubble} flex h-[257px] w-[856px] items-end justify-between pr-[19px] pb-[10px] pl-[24px]`}>
        <p className="mb-[7px] whitespace-nowrap">
          <span className="tracking-normal">
            I think if a train is not in today's
            <br />
            interchange, and if it is HO, it's
          </span>
          <br />
          not being counted in "already
          <br />
          interchange" count also
        </p>
        <Time>9:31 pm</Time>
      </div>

      <div className="relative mt-[17px] ml-[172px] flex h-[335px] w-[856px] flex-col rounded-[18px] rounded-tr-none bg-[#e1ffc7] px-[12px] pt-[12px] shadow-[0_1px_2px_rgba(0,0,0,0.14)]">
        <svg className="absolute top-0 left-[855px]" width="24" height="38" viewBox="0 0 24 38">
          <path d="M0 1.500H18Q24 2.500 21 8.500L1 36.500H0Z" fill="#c5cfb4" />
          <path d="M0 0H18Q24 1 21 7L1 35H0Z" fill="#e1ffc7" />
        </svg>
        <div className="flex h-[237px] overflow-hidden rounded-[8px] border-y border-r border-[#c8e4b2] bg-[#d9f6c1]">
          <div className="-my-px w-[9px] shrink-0 bg-[#8c378f]" />
          <div className="pt-[18px] pl-[24px] text-[42px] whitespace-nowrap">
            <div className="font-medium leading-[49px] tracking-normal text-[#8c378f]">Aman Mittal Sir</div>
            <div className="mt-[8px] leading-[49px] tracking-[-0.100px] text-[#63755a]">
              <div>I think if a train is not in today's</div>
              <div>interchange, and if it is HO, it's not being</div>
              <div className="leading-[46px]">counted in "already interchange" count a...</div>
            </div>
          </div>
        </div>
        <div className="flex items-start justify-between pt-[12px] pr-[8px] pl-[12px]">
          <p>Ok i check</p>
          <div className="mt-[22px] flex items-center">
            <span className="text-[36px] leading-[42px] tracking-[-0.100px] text-[#869b76]">9:36 pm</span>
            <svg className="ml-[11px]" width="48" height="34" viewBox="0 0 48 34" fill="none" stroke="#90aa85" strokeWidth="4.500">
              <path d="M2 19L12 29.500L34 0M22 25L26 29.500L47 0" />
            </svg>
          </div>
        </div>
      </div>
    </div>
  );
}

function Composer() {
  return (
    <div className="flex items-center pl-[15px]">
      <div className="flex h-[136px] w-[896px] items-center rounded-full bg-white pr-[39px] pl-[32px] shadow-[0_2px_3px_rgba(0,0,0,0.25)]">
        <svg className="mt-[1px]" width="64" height="64" viewBox="0 0 64 64" fill="#858b93">
          <circle cx="32" cy="32" r="29.200" fill="none" stroke="#858b93" strokeWidth="5" />
          <ellipse cx="23.500" cy="25.500" rx="4.300" ry="5.500" />
          <ellipse cx="40.500" cy="25.500" rx="4.300" ry="5.500" />
          <path d="M15 35Q32 39 49.500 35Q47 50.500 32 50.500Q18 50.500 15 35Z" />
          <path d="M19.500 40Q32 43 45 40Q42 45.500 32 45.500Q22 45.500 19.500 40Z" fill="#fff" />
        </svg>
        <div className="ml-[33px] h-[73px] w-[6px] bg-[#00897b]" />
        <span className="relative -ml-[6px] pt-[4px] text-[54px] leading-[64px] tracking-[-0.120px] whitespace-nowrap text-[#cbcbcb]">
          Type a message
        </span>
        <svg className="ml-auto" width="64" height="60" viewBox="0 0 64 60" fill="none" stroke="#858b8f" strokeWidth="5" strokeLinecap="round" strokeLinejoin="round">
          <path d="M34.500 7L56.500 30.500C63.500 38 62 49 55.500 54C49 58.500 41.500 57.500 36 52L7 21.500C2 16.500 2.500 10 6.500 6C10.500 2 17 2 21.500 6.500L44.500 31C47.500 34.500 47.500 38 45.500 40C43 42.500 39.500 42 37 39.500L20 21" />
        </svg>
        <svg className="ml-[70px]" width="60" height="60" viewBox="0 0 60 60">
          <rect width="60" height="59" y="0.500" rx="14" fill="#858b93" />
          <circle cx="30" cy="30" r="14" fill="none" stroke="#fff" strokeWidth="5" />
        </svg>
      </div>
      <div className="ml-[15px] flex size-[141px] items-center justify-center rounded-full bg-[#00897b] shadow-[0_3px_6px_rgba(0,0,0,0.25)]">
        <svg className="mt-[2px]" width="46" height="64" viewBox="0 0 46 64" fill="none" stroke="#fff">
          <rect x="14" y="0" width="18" height="38" rx="9" fill="#fff" stroke="none" />
          <path d="M4 31C5 54 41 54 42 31" strokeWidth="5" strokeLinecap="round" />
          <path d="M23 49V61" strokeWidth="6" strokeLinecap="round" />
        </svg>
      </div>
    </div>
  );
}

export default function App() {
  return (
    <div className="relative flex h-[1920px] w-[1080px] flex-col overflow-hidden bg-[#eee6dd] bg-linear-to-b from-[#ebebe4] from-12% via-[#efe7de] via-36% to-[#ede4db] font-[Roboto,sans-serif]">
      <Wallpaper />
      <div className="relative z-10 shadow-[0_3px_12px_rgba(0,0,0,0.45)]">
        <StatusBar />
        <Header />
      </div>
      <div className="relative">
        <Messages />
      </div>
      <div className="relative mt-[9.500px]">
        <Composer />
        <div className="absolute -top-[154px] left-[947px] flex size-[98px] items-center justify-center rounded-full bg-[#f9faf7]/92 shadow-[0_2px_4px_rgba(0,0,0,0.14)]">
          <svg className="mt-[8px]" width="36" height="34" viewBox="0 0 36 34" fill="none" stroke="#8a9293" strokeWidth="4.500" strokeLinecap="round">
            <path d="M3 3L18 16L33 3M3 17.500L18 30.500L33 17.500" />
          </svg>
        </div>
      </div>
    </div>
  );
}
